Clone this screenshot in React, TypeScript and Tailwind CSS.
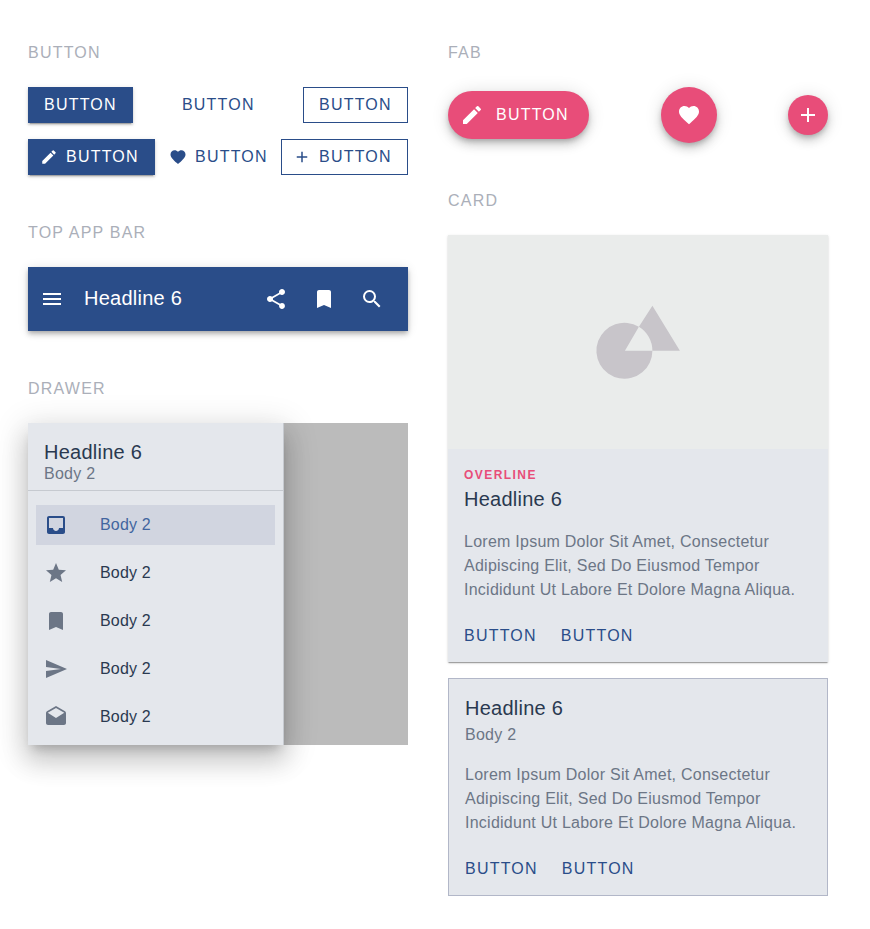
import { MdEdit, MdFavorite, MdAdd, MdMenu, MdShare, MdBookmark, MdSearch, MdInbox, MdStar, MdSend, MdDrafts } from "react-icons/md";
import type { ReactNode } from "react";

const base = "box-border flex h-9 items-center text-[16px] tracking-[1.22px] leading-none";
const raised = "shadow-[0_3px_1px_-2px_#0003,0_2px_2px_#00000024,0_1px_5px_#0000001f]";
const floating = "bg-[#e84d79] shadow-[0_3px_5px_-1px_#0003,0_6px_10px_#00000024,0_1px_18px_#0000001f]";

function Label({ children }: { children: string }) {
  return <h2 className="h-6 pt-px text-[16px] leading-6 tracking-[1.22px] text-[#abafb9]">{children}</h2>;
}

function DrawerRow({ icon, active = false }: { icon: ReactNode; active?: boolean }) {
  return (
    <li className={active ? "flex h-10 items-center bg-[#d1d5e0] pl-2 text-[#42659f]" : "flex h-10 items-center pl-2 text-[#2a3950]"}>
      <span className={active ? "text-2xl text-[#2a4d89]" : "text-2xl text-[#6c7686]"}>{icon}</span>
      <span className="ml-8 text-[16px] tracking-[0.18px]">Body 2</span>
    </li>
  );
}

function Lorem() {
  return (
    <p className="text-[16px] leading-6 tracking-[0.25px] whitespace-nowrap text-[#6c7686]">
      Lorem Ipsum Dolor Sit Amet, Consectetur<br />
      Adipiscing Elit, Sed Do Eiusmod Tempor<br />
      Incididunt Ut Labore Et Dolore Magna Aliqua.
    </p>
  );
}

function Actions() {
  return (
    <div className="flex h-9 items-center gap-6 text-[16px] tracking-[1.22px] text-[#2a4d89]">
      <button>BUTTON</button><button>BUTTON</button>
    </div>
  );
}

export default function App() {
  return (
    <main className="flex h-[929px] w-[870px] gap-10 overflow-hidden bg-white pt-10 pl-7 font-['Liberation_Sans',Arial,sans-serif]">
      <section className="w-[380px] shrink-0">
        <Label>BUTTON</Label>
        <div className="mt-[23px] flex justify-between">
          <button className={`${base} ${raised} w-[105px] bg-[#2a4d89] pl-4 text-white`}>BUTTON</button>
          <button className={`${base} w-[105px] pl-[16.4px] text-[#2a4d89]`}>BUTTON</button>
          <button className={`${base} w-[105px] border border-[#2a4d89] pl-[15px] text-[#2a4d89]`}>BUTTON</button>
        </div>
        <div className="mt-4 flex justify-between">
          <button className={`${base} ${raised} w-[127px] gap-2 bg-[#2a4d89] pl-3 text-white`}><MdEdit size={18} />BUTTON</button>
          <button className={`${base} w-[112px] gap-2 pl-[7px] text-[#2a4d89]`}><MdFavorite size={18} />BUTTON</button>
          <button className={`${base} w-[127px] gap-2 border border-[#2a4d89] pl-[11px] text-[#2a4d89]`}><MdAdd size={18} />BUTTON</button>
        </div>
        <div className="mt-[45px]"><Label>TOP APP BAR</Label></div>
        <header className="mt-[23px] flex h-16 items-center bg-[#2a4d89] px-3 text-2xl text-white shadow-[0_2px_4px_-1px_#0003,0_4px_5px_#00000024,0_1px_10px_#0000001f]">
          <MdMenu /><h1 className="ml-5 flex-1 pb-0.5 text-[20px] tracking-[0.25px]">Headline 6</h1>
          <div className="flex gap-6 pr-3"><MdShare /><MdBookmark /><MdSearch /></div>
        </header>
        <div className="mt-[45px]"><Label>DRAWER</Label></div>
        <div className="mt-[23px] flex h-[322px] bg-[#bbbbbb]">
          <aside className="w-64 border-r border-[#c6cad0] bg-[#e4e7ec] shadow-[0_8px_10px_-5px_#0003,0_16px_24px_2px_#00000024,0_6px_30px_5px_#0000001f]">
            <div className="h-[68px] border-b border-[#c6cad0] px-4 pt-[17px]">
              <h3 className="text-[20px] leading-6 tracking-[0.25px] text-[#2a3950]">Headline 6</h3>
              <p className="text-[16px] leading-[19px] tracking-[0.25px] text-[#6c7686]">Body 2</p>
            </div>
            <ul className="mt-[14px] space-y-2 px-2">
              <DrawerRow active icon={<MdInbox />} /><DrawerRow icon={<MdStar />} /><DrawerRow icon={<MdBookmark />} /><DrawerRow icon={<MdSend />} /><DrawerRow icon={<MdDrafts />} />
            </ul>
          </aside>
        </div>
      </section>
      <section className="w-[380px] shrink-0">
        <Label>FAB</Label>
        <div className="mt-[23px] flex h-14 items-center justify-between text-white">
          <button className={`${floating} flex h-12 w-[141px] items-center gap-3 rounded-full pl-3 text-[16px] tracking-[1.22px]`}><MdEdit size={24} />BUTTON</button>
          <button className={`${floating} flex size-14 items-center justify-center rounded-full`}><MdFavorite size={24} /></button>
          <button className={`${floating} flex size-10 items-center justify-center rounded-full`}><MdAdd size={24} /></button>
        </div>
        <div className="mt-[45px]"><Label>CARD</Label></div>
        <article className="mt-[23px] h-[427px] bg-[#e4e7ec] shadow-[0_2px_1px_-1px_#0003,0_1px_1px_#00000024,0_1px_3px_#0000001f]">
          <div className="flex h-[214px] items-center justify-center bg-[#eaeceb]">
            <svg className="h-[74px] w-[84px] overflow-visible" viewBox="-0.4 -0.8 84 74"><path fill="#c8c5ca" fillRule="evenodd" d="M56 45A28 28 0 1 1 42.5 21L56 0 83.5 45ZM42.5 21 28.5 45H56A28 28 0 0 0 42.5 21Z" /></svg>
          </div>
          <div className="px-4 pt-[18px]">
            <p className="text-[12px] leading-4 font-bold tracking-[1.45px] text-[#e84d79]">OVERLINE</p>
            <h3 className="mt-1 text-[20px] leading-6 tracking-[0.25px] text-[#2a3950]">Headline 6</h3>
            <div className="mt-[19px]"><Lorem /></div>
            <div className="mt-4"><Actions /></div>
          </div>
        </article>
        <article className="mt-4 h-[218px] border border-[#b2b7c8] bg-[#e4e7ec] px-4 pt-[17px]">
          <h3 className="text-[20px] leading-6 tracking-[0.25px] text-[#2a3950]">Headline 6</h3>
          <p className="mt-[3px] text-[16px] leading-6 tracking-[0.25px] text-[#6c7686]">Body 2</p>
          <div className="mt-4"><Lorem /></div>
          <div className="mt-4"><Actions /></div>
        </article>
      </section>
    </main>
  );
}
